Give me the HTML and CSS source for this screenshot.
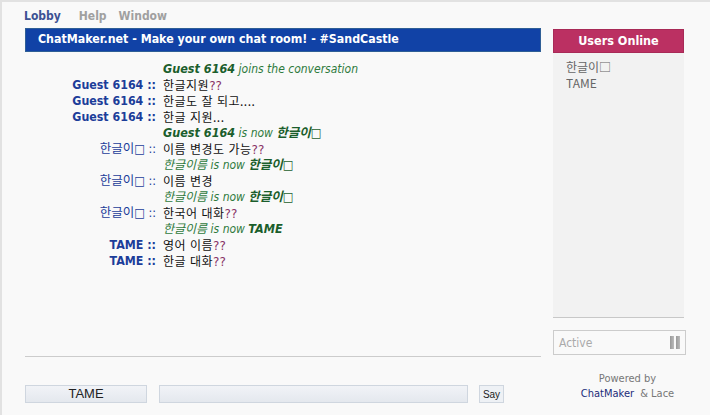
FILE: index.html
```html
<!DOCTYPE html>
<html lang="ko">
<head>
<meta charset="utf-8">
<link rel="stylesheet" href="styles.css">
</head>
<body>
<div class="app">
  <div class="main">
    <nav class="menu">
      <span class="menu-item active">Lobby</span>
      <span class="menu-item">Help</span>
      <span class="menu-item">Window</span>
    </nav>
    <div class="title">ChatMaker.net - Make your own chat room! - #SandCastle</div>
    <div class="chat">
      <div class="line"><span class="who"></span><span class="sys"><b>Guest 6164</b> joins the conversation</span></div>
      <div class="line"><span class="who">Guest 6164 ::</span><span class="msg">한글지원<i class="q">??</i></span></div>
      <div class="line"><span class="who">Guest 6164 ::</span><span class="msg">한글도 잘 되고....</span></div>
      <div class="line"><span class="who">Guest 6164 ::</span><span class="msg">한글 지원...</span></div>
      <div class="line"><span class="who"></span><span class="sys"><b>Guest 6164</b> is now <b>한글이□</b></span></div>
      <div class="line"><span class="who ko">한글이□ ::</span><span class="msg">이름 변경도 가능<i class="q">??</i></span></div>
      <div class="line"><span class="who"></span><span class="sys">한글이름 is now <b>한글이□</b></span></div>
      <div class="line"><span class="who ko">한글이□ ::</span><span class="msg">이름 변경</span></div>
      <div class="line"><span class="who"></span><span class="sys">한글이름 is now <b>한글이□</b></span></div>
      <div class="line"><span class="who ko">한글이□ ::</span><span class="msg">한국어 대화<i class="q">??</i></span></div>
      <div class="line"><span class="who"></span><span class="sys">한글이름 is now <b>TAME</b></span></div>
      <div class="line"><span class="who">TAME ::</span><span class="msg">영어 이름<i class="q">??</i></span></div>
      <div class="line"><span class="who">TAME ::</span><span class="msg">한글 대화<i class="q">??</i></span></div>
    </div>
    <div class="compose">
      <div class="nick">TAME</div>
      <div class="input"></div>
      <button class="say">Say</button>
    </div>
  </div>
  <aside class="side">
    <div class="users-head">Users Online</div>
    <div class="users">
      <div>한글이□</div>
      <div>TAME</div>
    </div>
    <div class="status">
      <span>Active</span>
      <span class="pause"><i></i><i></i></span>
    </div>
    <div class="powered">
      <div>Powered by</div>
      <div><span class="brand">ChatMaker</span> &amp; Lace</div>
    </div>
  </aside>
</div>
</body>
</html>
```
FILE: styles.css
```css
* { box-sizing: border-box; }
html, body { margin: 0; padding: 0; }
body {
  width: 710px;
  height: 415px;
  overflow: hidden;
  background: #f9f9f9;
  font-family: "DejaVu Sans", Verdana, "Noto Sans CJK KR", sans-serif;
  font-size: 12px;
  color: #222;
}
.app {
  width: 710px;
  height: 415px;
  border-top: 2px solid #e2e2e2;
  border-left: 2px solid #e2e2e2;
  display: flex;
  padding-left: 23px;
}
.main {
  width: 516px;
  display: flex;
  flex-direction: column;
}
.menu {
  height: 26px;
  display: flex;
  padding-top: 6px;
  font-size: 12px;
  font-weight: bold;
  font-stretch: condensed;
  line-height: 16px;
}
.menu-item { color: #a0a0a0; margin-right: 12px; }
.menu-item.active { color: #3d5294; margin-right: 18px; margin-left: -1px; }
.title {
  height: 24px;
  background: #1142a6;
  border: 1px solid #2f5f96;
  color: #fff;
  font-weight: bold;
  font-size: 12.3px;
  font-stretch: condensed;
  line-height: 21px;
  padding-left: 12px;
  white-space: nowrap;
}
.chat {
  flex: 1;
  padding-top: 9px;
  border-bottom: 1px solid #cccccc;
  margin-bottom: 28px;
}
.line {
  display: flex;
  height: 16px;
  line-height: 16px;
  white-space: nowrap;
}
.who {
  width: 131px;
  flex: none;
  text-align: right;
  color: #1c3d99;
  font-weight: bold;
  font-stretch: condensed;
  font-size: 12.3px;
}
.who.ko { font-weight: normal; font-size: 12.5px; }
.msg, .sys { margin-left: 7px; }
.msg { color: #111; font-family: "Noto Sans CJK KR", sans-serif; font-size: 12px; letter-spacing: 0.5px; }
.q { font-style: normal; color: #883366; font-family: "DejaVu Sans", sans-serif; font-size: 12px; letter-spacing: 0; }
.sys {
  font-style: italic;
  color: #2e7a3c;
  font-size: 12px;
  font-stretch: condensed;
}
.sys b { color: #1b5e2c; font-size: 12.5px; }
.compose {
  height: 30px;
  display: flex;
  align-items: flex-start;
}
.nick {
  width: 122px;
  height: 18px;
  border: 1px solid #cfd6df;
  background: linear-gradient(#f1f3f7, #e4e8ee);
  text-align: center;
  font-family: "Liberation Sans", sans-serif;
  font-size: 13px;
  line-height: 16px;
  color: #222;
}
.input {
  width: 309px;
  height: 18px;
  margin-left: 12px;
  border: 1px solid #cfd6df;
  background: linear-gradient(#f1f3f7, #e4e8ee);
}
.say {
  margin-left: 11px;
  width: 25px;
  height: 18px;
  padding: 0;
  border: 1px solid #cfd6df;
  background: #eef1f5;
  font-family: "Liberation Sans", sans-serif;
  font-size: 10px;
  color: #222;
}
.side {
  width: 131px;
  margin-left: 12px;
  margin-top: 27px;
  display: flex;
  flex-direction: column;
}
.users-head {
  height: 24px;
  background: #bb3062;
  border: 1px solid #a82a57;
  color: #fff;
  font-weight: bold;
  font-size: 12.5px;
  font-stretch: condensed;
  text-align: center;
  line-height: 22px;
}
.users {
  height: 265px;
  background: #f2f2f2;
  border-bottom: 1px solid #c8c8c8;
  padding: 6px 13px;
  color: #666;
  font-family: "Noto Sans CJK KR", sans-serif;
  font-size: 12px;
  line-height: 16px;
}
.users div { height: 16px; overflow: hidden; }
.status {
  margin-top: 12px;
  width: 133px;
  height: 25px;
  border: 1px solid #cccccc;
  display: flex;
  align-items: center;
  justify-content: space-between;
  padding: 0 5px 0 5px;
  color: #aaa;
  font-size: 12px;
  font-stretch: condensed;
}
.pause { display: flex; gap: 2px; }
.pause i { display: block; width: 4px; height: 13px; background: linear-gradient(90deg, #999, #bbb); }
.powered {
  margin-top: 16px;
  text-align: center;
  color: #777;
  font-size: 11px;
  line-height: 15px;
  font-stretch: condensed;
  padding-left: 18px;
}
.brand { color: #1c2c7a; margin-right: 3px; }
```
